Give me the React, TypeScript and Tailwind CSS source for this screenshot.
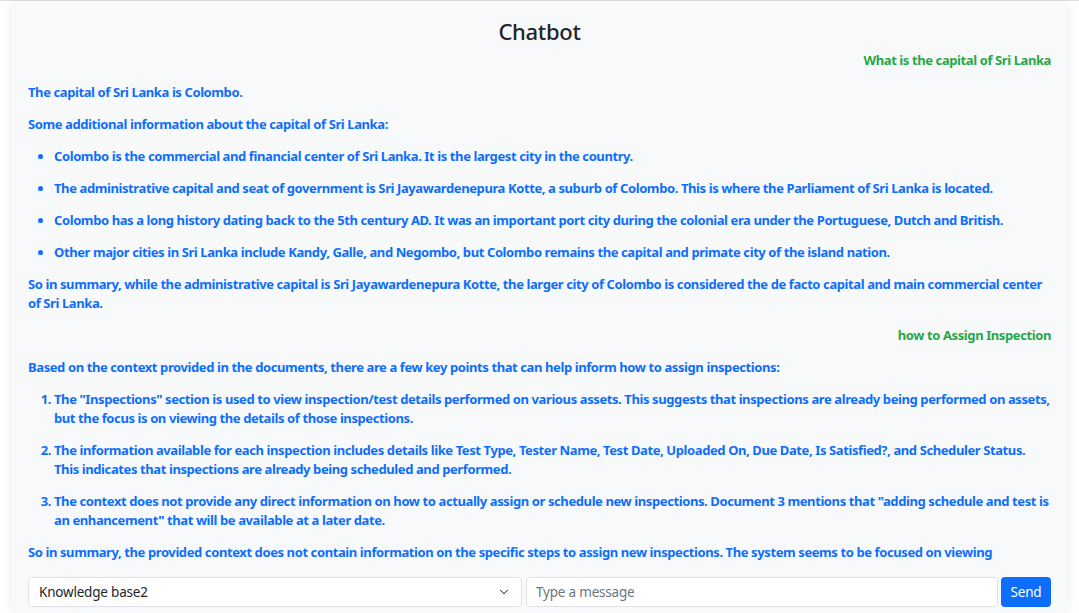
import { ChevronDown } from "lucide-react";

type Block =
  | { kind: "p"; text: string }
  | { kind: "ul"; items: string[] }
  | { kind: "ol"; items: string[] };

type Message = { from: "user"; text: string } | { from: "bot"; blocks: Block[] };

const messages: Message[] = [
  { from: "user", text: "What is the capital of Sri Lanka" },
  {
    from: "bot",
    blocks: [
      { kind: "p", text: "The capital of Sri Lanka is Colombo." },
      { kind: "p", text: "Some additional information about the capital of Sri Lanka:" },
      {
        kind: "ul",
        items: [
          "Colombo is the commercial and financial center of Sri Lanka. It is the largest city in the country.",
          "The administrative capital and seat of government is Sri Jayawardenepura Kotte, a suburb of Colombo. This is where the Parliament of Sri Lanka is located.",
          "Colombo has a long history dating back to the 5th century AD. It was an important port city during the colonial era under the Portuguese, Dutch and British.",
          "Other major cities in Sri Lanka include Kandy, Galle, and Negombo, but Colombo remains the capital and primate city of the island nation.",
        ],
      },
      {
        kind: "p",
        text: "So in summary, while the administrative capital is Sri Jayawardenepura Kotte, the larger city of Colombo is considered the de facto capital and main commercial center of Sri Lanka.",
      },
    ],
  },
  { from: "user", text: "how to Assign Inspection" },
  {
    from: "bot",
    blocks: [
      {
        kind: "p",
        text: "Based on the context provided in the documents, there are a few key points that can help inform how to assign inspections:",
      },
      {
        kind: "ol",
        items: [
          'The "Inspections" section is used to view inspection/test details performed on various assets. This suggests that inspections are already being performed on assets, but the focus is on viewing the details of those inspections.',
          "The information available for each inspection includes details like Test Type, Tester Name, Test Date, Uploaded On, Due Date, Is Satisfied?, and Scheduler Status. This indicates that inspections are already being scheduled and performed.",
          'The context does not provide any direct information on how to actually assign or schedule new inspections. Document 3 mentions that "adding schedule and test is an enhancement" that will be available at a later date.',
        ],
      },
      {
        kind: "p",
        text: "So in summary, the provided context does not contain information on the specific steps to assign new inspections. The system seems to be focused on viewing",
      },
    ],
  },
];

function BotBlock({ block }: { block: Block }) {
  if (block.kind === "p") return <p className="mb-[13px]">{block.text}</p>;
  if (block.kind === "ul")
    return (
      <ul className="list-disc pl-[26px]">
        {block.items.map((t, i) => (
          <li key={i} className="mb-[13px]">{t}</li>
        ))}
      </ul>
    );
  return (
    <ol className="list-decimal pl-[26px]">
      {block.items.map((t, i) => (
        <li key={i} className="mb-[13px]">{t}</li>
      ))}
    </ol>
  );
}

export default function App() {
  return (
    <div className="min-h-screen bg-white border-t border-[#dee2e6] font-['Noto_Sans',sans-serif]">
      <div className="mx-3 h-[612px] bg-[#f8f9fa] shadow-[0_0_12px_rgba(0,0,0,0.07)] px-4 pt-[17px] pb-[6px] flex flex-col">
        <h2 className="text-center text-[22px] leading-[26px] font-medium text-[#212529] mb-[7px] tracking-[-0.3px]">
          Chatbot
        </h2>

        {/* messages */}
        <div className="flex-1 overflow-hidden text-[13px] leading-[19px] font-bold tracking-[-0.4px]">
          {messages.map((m, i) =>
            m.from === "user" ? (
              <div key={i} className="text-right text-[#28a745] mb-[13px]">
                {m.text}
              </div>
            ) : (
              <div key={i} className="text-[#0d6efd]">
                {m.blocks.map((b, j) => (
                  <BotBlock key={j} block={b} />
                ))}
              </div>
            )
          )}
        </div>

        {/* input row */}
        <div className="mt-3 h-[30px] flex items-stretch text-[13.5px] tracking-[-0.2px]">
          <div className="w-[494px] mr-[4px] bg-white border border-[#dee2e6] rounded-[4px] flex items-center justify-between pl-[10px] pr-[10px] text-[#212529]">
            <span>Knowledge base2</span>
            <ChevronDown size={14} strokeWidth={1.8} className="text-[#343a40]" />
          </div>
          <input
            className="flex-1 bg-white border border-[#dee2e6] rounded-[4px] px-[9px] text-[#212529] placeholder:text-[#6c757d] outline-none"
            placeholder="Type a message"
          />
          <button className="ml-[3px] w-[50px] bg-[#0d6efd] text-white rounded-[4px]">Send</button>
        </div>
      </div>
    </div>
  );
}
